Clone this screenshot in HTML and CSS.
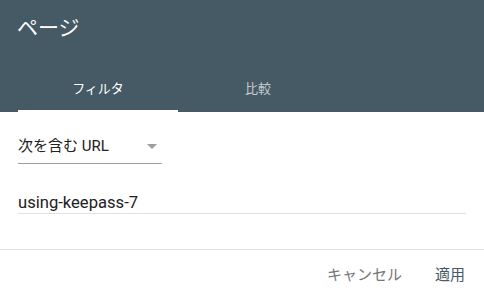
FILE: index.html
```html
<!DOCTYPE html>
<html lang="ja">

<head>
    <meta charset="UTF-8">
    <meta name="viewport" content="width=device-width, initial-scale=1.0">
    <title>ページ</title>
    <link rel="stylesheet" href="styles.css">
</head>

<body>
    <div class="dialog">
        <header class="head">
            <h2 class="title">ページ</h2>
            <nav class="tabs">
                <div class="tab active">フィルタ</div>
                <div class="tab">比較</div>
            </nav>
        </header>
        <section class="content">
            <div class="select">
                <span class="select-text">次を含む URL</span>
                <span class="arrow"></span>
            </div>
            <div class="field">
                <input type="text" value="using-keepass-7">
            </div>
        </section>
        <footer class="actions">
            <button class="btn cancel">キャンセル</button>
            <button class="btn apply">適用</button>
        </footer>
    </div>
</body>

</html>
```

FILE: styles.css
```css
* {
    margin: 0;
    padding: 0;
    box-sizing: border-box;
}

body {
    font-family: Roboto, "Noto Sans CJK JP", sans-serif;
    background: #fff;
    color: #212121;
}

.head {
    background-color: #455a64;
    color: #fff;
    height: 112px;
}

.title {
    font-size: 21px;
    font-weight: 400;
    line-height: 24px;
    height: 64px;
    padding: 16px 17px 0;
}

.tabs {
    display: flex;
    padding: 0 18px;
}

.tab {
    width: 160px;
    height: 48px;
    display: flex;
    align-items: center;
    justify-content: center;
    font-size: 13px;
    color: rgba(255, 255, 255, 0.7);
    border-bottom: 2px solid transparent;
}

.tab.active {
    color: #fff;
    border-bottom-color: #fff;
}

.content {
    padding: 24px 18px 0;
}

.select {
    width: 144px;
    display: flex;
    align-items: center;
    justify-content: space-between;
    font-size: 15px;
    line-height: 20px;
    padding-bottom: 7px;
    border-bottom: 1px solid #9e9e9e;
}

.arrow {
    width: 0;
    height: 0;
    margin-right: 5px;
    border-left: 5px solid transparent;
    border-right: 5px solid transparent;
    border-top: 5px solid #9e9e9e;
}

.field {
    margin-top: 28px;
}

.field input {
    width: 100%;
    border: none;
    border-bottom: 1px solid #e0e0e0;
    outline: none;
    font-family: inherit;
    font-size: 16.6px;
    line-height: 20px;
    padding: 1px 0 0;
    color: #212121;
    background: transparent;
}

.actions {
    margin-top: 35px;
    border-top: 1px solid #e0e0e0;
    display: flex;
    justify-content: flex-end;
    gap: 33px;
    padding: 13px 19px 0 0;
}

.btn {
    border: none;
    background: transparent;
    font-family: inherit;
    font-size: 15px;
    line-height: 24px;
    cursor: pointer;
}

.cancel {
    color: #757575;
}

.apply {
    color: #455a64;
}
```
